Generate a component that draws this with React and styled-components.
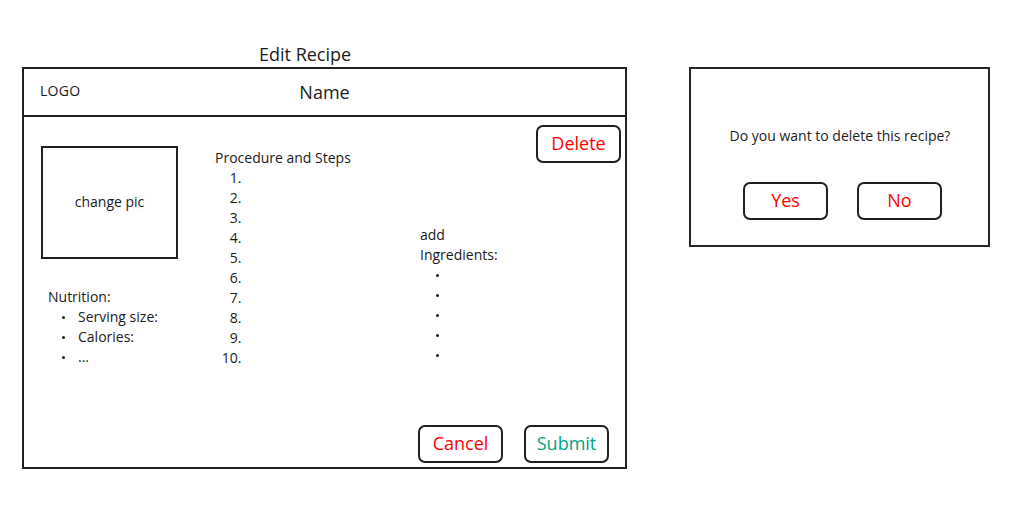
import React from "react";
import styled, { createGlobalStyle } from "styled-components";

const GlobalStyle = createGlobalStyle`
  html, body {
    margin: 0;
    padding: 0;
    background: #ffffff;
  }
  body {
    font-family: "Open Sans", "Liberation Sans", sans-serif;
    color: #1a1a1a;
  }
`;

const Page = styled.div`
  display: grid;
  grid-template-columns: 605px 301px;
  grid-template-rows: auto auto;
  column-gap: 62px;
  padding: 41px 0 0 22px;
`;

const Title = styled.div`
  grid-column: 1;
  grid-row: 1;
  font-size: 18px;
  line-height: 26px;
  padding-left: 237px;
`;

const Frame = styled.div`
  grid-column: 1;
  grid-row: 2;
  box-sizing: border-box;
  height: 402px;
  border: 2px solid #1f1f1f;
  display: flex;
  flex-direction: column;
`;

const Header = styled.div`
  display: grid;
  grid-template-columns: 1fr auto 1fr;
  align-items: center;
  box-sizing: border-box;
  height: 48px;
  border-bottom: 2px solid #1f1f1f;
  padding: 0 16px;
`;

const Logo = styled.div`
  font-size: 14px;
  margin-top: -4px;
  letter-spacing: 0.3px;
`;

const NameText = styled.div`
  font-size: 18px;
`;

const Body = styled.div`
  flex: 1;
  display: flex;
  flex-direction: column;
  padding: 8px 4px 4px 17px;
`;

const Columns = styled.div`
  display: flex;
  align-items: flex-start;
`;

const LeftCol = styled.div`
  width: 174px;
  margin-top: 21px;
`;

const PicBox = styled.div`
  box-sizing: border-box;
  width: 137px;
  height: 113px;
  border: 2px solid #1f1f1f;
  display: flex;
  align-items: center;
  justify-content: center;
  font-size: 14px;
  padding-bottom: 2px;
`;

const Block = styled.div`
  font-size: 14px;
  line-height: 20px;
  margin-top: ${(p) => p.$top || 0}px;
  margin-left: ${(p) => p.$left || 0}px;
  width: ${(p) => (p.$width ? `${p.$width}px` : "auto")};
`;

const Heading = styled.div`
  width: ${(p) => (p.$width ? `${p.$width}px` : "auto")};
`;

const Steps = styled.ol`
  margin: 0;
  padding-left: 30px;
`;

const Bullets = styled.ul`
  margin: 0;
  padding: 0;
  list-style: none;
  li {
    display: flex;
    align-items: center;
    height: 20px;
  }
  li::before {
    content: "";
    width: 3px;
    height: 3px;
    border-radius: 50%;
    background: #1a1a1a;
    margin-left: ${(p) => p.$indent}px;
    margin-right: 13px;
  }
`;

const Spacer = styled.div`
  flex: 1;
`;

const Button = styled.button`
  box-sizing: border-box;
  width: 85px;
  height: 38px;
  border: 2px solid #1f1f1f;
  border-radius: 7px;
  background: #ffffff;
  font-family: "Open Sans", "Liberation Sans", sans-serif;
  font-size: 18px;
  padding: 0 0 2px;
  color: ${(p) => (p.$tone === "go" ? "#00a384" : "#ff0000")};
  cursor: pointer;
`;

const Footer = styled.div`
  margin-top: auto;
  display: flex;
  justify-content: flex-end;
  gap: 21px;
  padding-right: 12px;
`;

const Dialog = styled.div`
  grid-column: 2;
  grid-row: 2;
  align-self: start;
  box-sizing: border-box;
  height: 180px;
  border: 2px solid #262626;
  display: flex;
  flex-direction: column;
  align-items: center;
  padding-top: 58px;
`;

const Question = styled.div`
  font-size: 14px;
  line-height: 18px;
  margin-left: 1px;
  color: #222222;
`;

const DialogButtons = styled.div`
  display: flex;
  gap: 29px;
  margin-top: 37px;
  margin-left: 6px;
`;

const steps = Array.from({ length: 10 }, (_, i) => i);
const ingredients = Array.from({ length: 5 }, (_, i) => i);

export default function App() {
  return (
    <>
      <GlobalStyle />
      <Page>
        <Title>Edit Recipe</Title>
        <Frame>
          <Header>
            <Logo>LOGO</Logo>
            <NameText>Name</NameText>
            <span />
          </Header>
          <Body>
            <Columns>
              <LeftCol>
                <PicBox>change pic</PicBox>
                <Block $top={28} $left={7}>
                  <Heading>Nutrition:</Heading>
                  <Bullets $indent={14}>
                    <li>Serving size:</li>
                    <li>Calories:</li>
                    <li>...</li>
                  </Bullets>
                </Block>
              </LeftCol>
              <Block $top={23} $width={205}>
                <Heading>Procedure and Steps</Heading>
                <Steps>
                  {steps.map((s) => (
                    <li key={s} />
                  ))}
                </Steps>
              </Block>
              <Block $top={100}>
                <Heading $width={95}>add Ingredients:</Heading>
                <Bullets $indent={16}>
                  {ingredients.map((s) => (
                    <li key={s} />
                  ))}
                </Bullets>
              </Block>
              <Spacer />
              <Button>Delete</Button>
            </Columns>
            <Footer>
              <Button>Cancel</Button>
              <Button $tone="go">Submit</Button>
            </Footer>
          </Body>
        </Frame>
        <Dialog>
          <Question>Do you want to delete this recipe?</Question>
          <DialogButtons>
            <Button>Yes</Button>
            <Button>No</Button>
          </DialogButtons>
        </Dialog>
      </Page>
    </>
  );
}
